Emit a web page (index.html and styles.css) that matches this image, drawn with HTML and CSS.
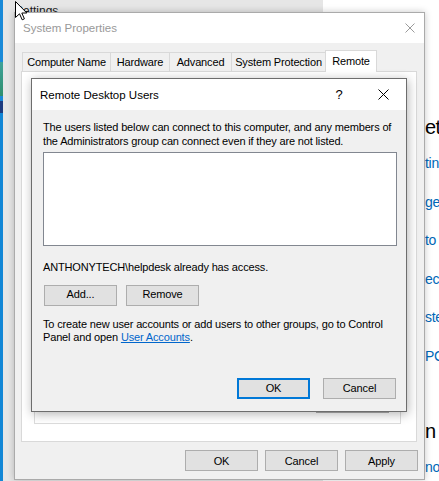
FILE: index.html
```html
<!DOCTYPE html>
<html>
<head>
<meta charset="utf-8">
<title>System Properties</title>
<link rel="stylesheet" href="styles.css">
</head>
<body>
<div class="desktop">
  <div class="strip">
    <div class="seg seg-blue1"></div>
    <div class="seg seg-teal"></div>
    <div class="seg seg-blue2"></div>
    <div class="seg seg-navy"></div>
    <div class="seg seg-blue3"></div>
  </div>
  <div class="settings">
    <div class="nav">
      <div class="settings-title">Settings</div>
    </div>
    <div class="content">
      <div class="c-head">et</div>
      <div class="c-links">
        <div class="c-link">tin</div>
        <div class="c-link">ge</div>
        <div class="c-link">to</div>
        <div class="c-link">ect</div>
        <div class="c-link">ste</div>
        <div class="c-link">PC</div>
      </div>
      <div class="c-head c-head2">n</div>
      <div class="c-link c-last">no</div>
    </div>
  </div>
</div>

<div class="sysprops">
  <div class="sp-title">
    <span>System Properties</span>
    <svg class="sp-close" width="10" height="10" viewBox="0 0 10 10"><path d="M0.5 0.5 L9.5 9.5 M9.5 0.5 L0.5 9.5" stroke="#9a9a9a" stroke-width="1" fill="none"/></svg>
  </div>
  <div class="tabs">
    <div class="tab t-cn">Computer Name</div>
    <div class="tab t-hw">Hardware</div>
    <div class="tab t-adv">Advanced</div>
    <div class="tab t-sp">System Protection</div>
    <div class="tab t-rem active">Remote</div>
  </div>
  <div class="panel">
    <div class="group">
      <div class="btn btn-select">Select Users...</div>
    </div>
  </div>
  <div class="sp-footer">
    <div class="btn btn-sp">OK</div>
    <div class="btn btn-sp">Cancel</div>
    <div class="btn btn-sp">Apply</div>
  </div>
</div>

<div class="rdu">
  <div class="rdu-title">
    <span class="rdu-name">Remote Desktop Users</span>
    <span class="help">?</span>
    <span class="close"><svg width="11" height="11" viewBox="0 0 11 11"><path d="M0.5 0.5 L10.5 10.5 M10.5 0.5 L0.5 10.5" stroke="#000" stroke-width="1" fill="none"/></svg></span>
  </div>
  <div class="rdu-body">
    <div class="para">The users listed below can connect to this computer, and any members of<br>the Administrators group can connect even if they are not listed.</div>
    <div class="list"></div>
    <div class="access">ANTHONYTECH\helpdesk already has access.</div>
    <div class="row">
      <div class="btn">Add...</div>
      <div class="btn">Remove</div>
    </div>
    <div class="note">To create new user accounts or add users to other groups, go to Control<br>Panel and open <span class="link">User Accounts</span>.</div>
    <div class="actions">
      <div class="btn btn-default">OK</div>
      <div class="btn">Cancel</div>
    </div>
  </div>
</div>

<svg class="cursor" width="13" height="20" viewBox="0 0 13 20">
  <path d="M0.5 0.5 L0.5 16.5 L4.5 12.8 L7.2 18.8 L9.4 17.8 L6.8 12 L11.8 12 Z" fill="#fff" stroke="#000" stroke-width="1" stroke-linejoin="miter"/>
</svg>
</body>
</html>
```

FILE: styles.css
```css
* { box-sizing: border-box; }
html, body { margin: 0; padding: 0; }
body {
  width: 439px;
  height: 481px;
  overflow: hidden;
  position: relative;
  font-family: "Liberation Sans", Arial, sans-serif;
  font-size: 11px;
  letter-spacing: -0.15px;
  color: #000;
  background: #e6e6e6;
}

/* background desktop + settings window */
.desktop { display: flex; height: 481px; }
.strip { width: 3px; display: flex; flex-direction: column; background: #1185d5; }
.seg { width: 3px; }
.seg-blue1 { height: 62px; background: #1a8ad8; }
.seg-teal { height: 34px; background: linear-gradient(#3fa29a, #2f8f6e); }
.seg-blue2 { height: 5px; background: #1a8ad8; }
.seg-navy { height: 12px; background: #1d3c80; }
.seg-blue3 { flex: 1; background: #1287d6; }

.settings { flex: 1; display: flex; }
.nav { width: 320px; background: #e6e6e6; }
.settings-title { font-size: 12px; letter-spacing: 0; padding: 4px 0 0 12px; color: #1a1a1a; }
.content {
  flex: 1;
  background: #fff;
  padding-left: 102px;
  overflow: hidden;
  white-space: nowrap;
  letter-spacing: 0;
}
.c-head { font-size: 20px; line-height: 24px; margin-top: 115px; color: #000; letter-spacing: -0.5px; }
.c-links { display: flex; flex-direction: column; gap: 18.5px; margin-top: 14px; }
.c-link { font-size: 14px; line-height: 20px; color: #0067b8; letter-spacing: -0.3px; }
.c-head2 { margin-top: 53.5px; }
.c-last { margin-top: 14px; }

/* System Properties window */
.sysprops {
  position: absolute;
  left: 14px;
  top: 12px;
  width: 411px;
  height: 468px;
  border: 1px solid #aaaaaa;
  background: #f0f0f0;
  box-shadow: 0 0 7px rgba(0, 0, 0, 0.22);
  display: flex;
  flex-direction: column;
}
.sp-title {
  height: 30px;
  background: #fff;
  display: flex;
  align-items: center;
  justify-content: space-between;
  padding: 0 9px 0 8px;
  font-size: 11.5px;
  letter-spacing: 0;
  color: #999;
}
.sp-close { display: block; }

.tabs {
  display: flex;
  align-items: flex-end;
  height: 21px;
  margin: 7px 0 0 7px;
  position: relative;
  z-index: 1;
}
.tab {
  height: 19px;
  border: 1px solid #d9d9d9;
  border-bottom: none;
  background: #f0f0f0;
  margin-left: -1px;
  display: flex;
  align-items: center;
  justify-content: center;
  white-space: nowrap;
}
.tab:first-child { margin-left: 0; }
.t-cn { width: 89px; }
.t-hw { width: 60px; }
.t-adv { width: 63px; }
.t-sp { width: 95px; }
.t-rem { width: 52px; }
.tab.active { height: 22px; margin-bottom: -1px; background: #fff; padding-bottom: 2px; }

.panel {
  height: 371px;
  margin: 0 7px 0 6px;
  background: #fff;
  border: 1px solid #d9d9d9;
  padding: 14px 15px 17px 12px;
  display: flex;
}
.group {
  flex: 1;
  border: 1px solid #dcdcdc;
  display: flex;
  flex-direction: column;
  justify-content: flex-end;
  align-items: flex-end;
  padding: 0 11px 10px 0;
}
.btn-select { width: 91px; height: 23px; border-color: #7a7a7a; }

.sp-footer {
  display: flex;
  justify-content: flex-end;
  gap: 7px;
  padding: 8px 6px 0 0;
}
.btn-sp { width: 74px; }

/* buttons */
.btn {
  width: 73px;
  height: 21px;
  background: #e1e1e1;
  border: 1px solid #adadad;
  display: flex;
  align-items: center;
  justify-content: center;
  white-space: nowrap;
}
.btn-default { border: 2px solid #0078d7; }

/* Remote Desktop Users dialog */
.rdu {
  position: absolute;
  left: 31px;
  top: 78px;
  width: 376px;
  height: 334px;
  border: 1px solid #6d6d6d;
  background: #f0f0f0;
  box-shadow: 1px 2px 10px rgba(0, 0, 0, 0.3);
  display: flex;
  flex-direction: column;
  z-index: 2;
}
.rdu-title {
  height: 31px;
  background: #fff;
  display: flex;
  align-items: center;
  padding-left: 8px;
  font-size: 11.5px;
  letter-spacing: 0;
}
.rdu-name { flex: 1; }
.help { width: 42px; text-align: center; font-size: 13px; }
.close { width: 46px; display: flex; justify-content: center; }
.close svg { display: block; }

.rdu-body {
  flex: 1;
  display: flex;
  flex-direction: column;
  padding: 11px 9px 12px 11px;
  line-height: 13.5px;
}
.list {
  height: 94px;
  margin-top: 4px;
  background: #fff;
  border: 1px solid #828790;
}
.access { margin-top: 15px; }
.row { display: flex; gap: 9px; margin: 10px 0 0 1px; }
.note { margin-top: 12px; }
.link { color: #0066cc; text-decoration: underline; }
.actions {
  margin-top: auto;
  display: flex;
  justify-content: flex-end;
  gap: 13px;
  padding-right: 1px;
}

.cursor { position: absolute; left: 15px; top: 1px; z-index: 5; display: block; }
```
